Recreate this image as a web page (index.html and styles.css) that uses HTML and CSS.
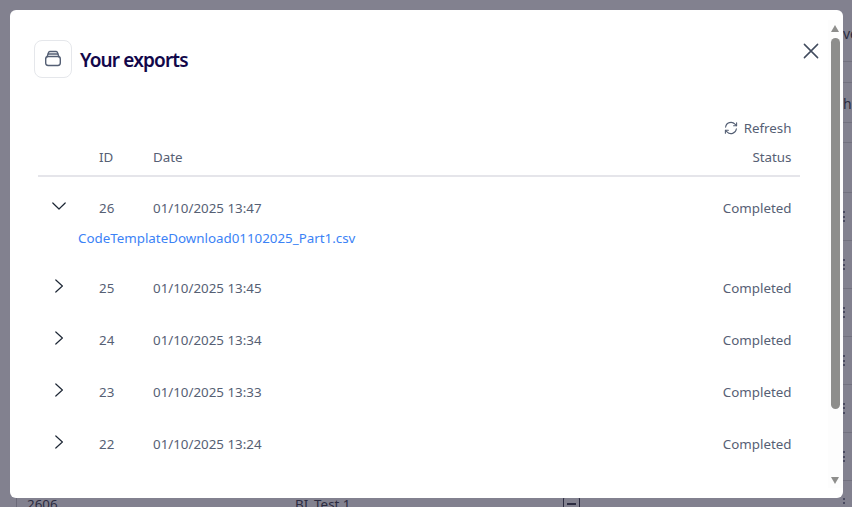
FILE: index.html
```html
<!DOCTYPE html>
<html lang="en">
<head>
<meta charset="utf-8">
<title>Your exports</title>
<link rel="stylesheet" href="styles.css">
</head>
<body>
<div class="page">
  <div class="bg-row bg-a"><span class="clip">ve</span></div>
  <div class="bg-row bg-b"></div>
  <div class="bg-row bg-c"><span class="clip">h</span></div>
  <div class="bg-row bg-d"></div>
  <div class="bg-row bg-e"></div>
  <div class="bg-row bg-item"><i class="kebab"></i></div>
  <div class="bg-row bg-item"><i class="kebab"></i></div>
  <div class="bg-row bg-item"><i class="kebab"></i></div>
  <div class="bg-row bg-item"><i class="kebab"></i></div>
  <div class="bg-row bg-item"><i class="kebab"></i></div>
  <div class="bg-row bg-item"><i class="kebab"></i></div>
  <div class="bg-row bg-item bg-last">
    <span class="foot-id">2606</span><span class="foot-name">BI_Test 1</span><span class="foot-box"><i></i></span><i class="kebab"></i>
  </div>
</div>
<div class="overlay">
  <section class="modal">
    <div class="modal-body">
      <header class="modal-head">
        <span class="head-icon">
          <svg width="18" height="18" viewBox="0 0 18 18" fill="none" stroke="#545f74" stroke-width="1.4" stroke-linecap="round" stroke-linejoin="round"><rect x="1.7" y="6.5" width="14.6" height="9" rx="2.4"/><path d="M3.2 6.5 4.5 2.6C4.7 1.9 5.1 1.5 5.8 1.5h6.4c.7 0 1.1.4 1.3 1.1l1.3 3.9"/><path d="M4.2 4h9.6"/></svg>
        </span>
        <h1>Your exports</h1>
      </header>
      <div class="refresh-row">
        <button class="refresh">
          <svg width="14" height="14" viewBox="0 0 14 14" fill="none" stroke="#545f74" stroke-width="1.1" stroke-linecap="round" stroke-linejoin="round"><path d="M1.6 6.2A5.4 5.4 0 0 1 11 3.2l1.4 1.5"/><path d="M12.6 1.8v3h-3"/><path d="M12.4 7.8A5.4 5.4 0 0 1 3 10.8L1.6 9.3"/><path d="M1.4 12.2v-3h3"/></svg>
          Refresh
        </button>
      </div>
      <div class="table">
        <div class="row thead"><span class="c-id">ID</span><span class="c-date">Date</span><span class="c-status">Status</span></div>
        <div class="row first">
          <svg class="chev" width="16" height="16" viewBox="0 0 16 16" fill="none" stroke="#1f2937" stroke-width="1.2" stroke-linecap="round" stroke-linejoin="round"><path d="M1.8 5 8 11l6.2-6"/></svg>
          <span class="c-id">26</span><span class="c-date">01/10/2025 13:47</span><span class="c-status">Completed</span>
        </div>
        <a class="file" href="#">CodeTemplateDownload01102025_Part1.csv</a>
        <div class="row">
          <svg class="chev" width="16" height="16" viewBox="0 0 16 16" fill="none" stroke="#1f2937" stroke-width="1.2" stroke-linecap="round" stroke-linejoin="round"><path d="M4.8 2 11.4 8l-6.6 6"/></svg>
          <span class="c-id">25</span><span class="c-date">01/10/2025 13:45</span><span class="c-status">Completed</span>
        </div>
        <div class="row">
          <svg class="chev" width="16" height="16" viewBox="0 0 16 16" fill="none" stroke="#1f2937" stroke-width="1.2" stroke-linecap="round" stroke-linejoin="round"><path d="M4.8 2 11.4 8l-6.6 6"/></svg>
          <span class="c-id">24</span><span class="c-date">01/10/2025 13:34</span><span class="c-status">Completed</span>
        </div>
        <div class="row">
          <svg class="chev" width="16" height="16" viewBox="0 0 16 16" fill="none" stroke="#1f2937" stroke-width="1.2" stroke-linecap="round" stroke-linejoin="round"><path d="M4.8 2 11.4 8l-6.6 6"/></svg>
          <span class="c-id">23</span><span class="c-date">01/10/2025 13:33</span><span class="c-status">Completed</span>
        </div>
        <div class="row">
          <svg class="chev" width="16" height="16" viewBox="0 0 16 16" fill="none" stroke="#1f2937" stroke-width="1.2" stroke-linecap="round" stroke-linejoin="round"><path d="M4.8 2 11.4 8l-6.6 6"/></svg>
          <span class="c-id">22</span><span class="c-date">01/10/2025 13:24</span><span class="c-status">Completed</span>
        </div>
      </div>
      <button class="close" aria-label="Close">
        <svg width="16" height="16" viewBox="0 0 16 16" fill="none" stroke="#414b5e" stroke-width="1.5" stroke-linecap="round"><path d="M1.4 1.4 14.6 14.6M14.6 1.4 1.4 14.6"/></svg>
      </button>
    </div>
    <div class="scrollbar">
      <span class="arrow up"></span>
      <span class="thumb"></span>
      <span class="arrow down"></span>
    </div>
  </section>
</div>
</body>
</html>
```
FILE: styles.css
```css
* { box-sizing: border-box; }
html, body { margin: 0; height: 100%; }
body {
  width: 852px;
  height: 507px;
  overflow: hidden;
  background: #82818f;
  font-family: "Noto Sans", sans-serif;
  color: #566074;
  font-size: 13.35px;
}

/* dimmed page behind the dialog */
.page { height: 507px; overflow: hidden; color: #2b2b40; }
.bg-row { display: flex; align-items: center; justify-content: flex-end; flex: none; margin-left: 16px; border-bottom: 1px solid #72717f; }
.clip { width: 9px; overflow: hidden; white-space: nowrap; font-size: 14px; }
.bg-a { height: 62px; padding-top: 6px; }
.bg-b { height: 21px; }
.bg-c { height: 40px; padding-top: 2px; }
.bg-d { height: 20px; }
.bg-e { height: 50px; }
.bg-item { height: 48px; padding-right: 7px; }
.bg-last { border-left: 1px solid #6b6a79; padding-left: 10px; padding-bottom: 1px; justify-content: flex-start; }
.foot-id, .foot-name { width: 268px; flex: none; }
.foot-box { width: 17px; height: 17px; flex: none; border: 1px solid #2b2b40; border-radius: 3px; display: flex; align-items: center; justify-content: center; }
.foot-box i { width: 9px; height: 2px; background: #2b2b40; }
.kebab {
  width: 2px;
  height: 12px;
  flex: none;
  background: repeating-linear-gradient(#4a4a60 0 2px, transparent 2px 4.5px);
}
.bg-last .kebab { margin-left: auto; }

/* dialog */
.overlay { position: fixed; inset: 0; padding: 10px 9px 9px 10px; }
.modal { height: 488px; background: #fff; border-radius: 6px; display: flex; overflow: hidden; }
.modal-body { flex: 1; padding: 30px 28px 0 24px; position: relative; }
.modal-head { display: flex; align-items: center; gap: 8px; height: 38px; }
.head-icon { width: 38px; height: 38px; border: 1px solid #e5e7eb; border-radius: 8px; display: flex; align-items: center; justify-content: center; }
h1 { margin: 0; padding-top: 2px; font-size: 19px; font-weight: 600; letter-spacing: -0.85px; color: #12074a; }
.refresh-row { display: flex; justify-content: flex-end; margin-top: 40px; padding-right: 8.5px; }
.refresh { background: none; border: 0; padding: 0; font: inherit; color: inherit; display: flex; align-items: center; gap: 6px; height: 20px; }
.table { margin-left: 4px; }
.row { display: flex; align-items: center; height: 52px; position: relative; padding: 0 8.5px 0 61px; }
.thead { height: 39px; padding-top: 1px; border-bottom: 2px solid #e5e5ea; }
.first { height: 44px; margin-top: 9px; }
.c-id { width: 54px; }
.c-date { flex: 1; }
.c-status { text-align: right; }
.chev { position: absolute; left: 13px; top: 50%; margin-top: -10px; }
.file { display: block; height: 32px; padding-left: 40px; color: #3b82f6; text-decoration: none; line-height: 16px; }
.close { position: absolute; right: 9px; top: 33px; width: 16px; height: 16px; padding: 0; border: 0; background: none; }
.close svg { display: block; }

/* scrollbar */
.scrollbar { width: 15px; flex: none; margin: 10px 0; padding: 5px 3px 4px; display: flex; flex-direction: column; background: #fdfdfd; }
.thumb { width: 9px; height: 371px; margin: 6px 0 auto; background: #8e8e8c; border-radius: 5px; }
.arrow { width: 0; height: 0; border-left: 4.5px solid transparent; border-right: 4.5px solid transparent; }
.up { border-bottom: 7px solid #8e8e8c; }
.down { border-top: 7px solid #8e8e8c; }
```
